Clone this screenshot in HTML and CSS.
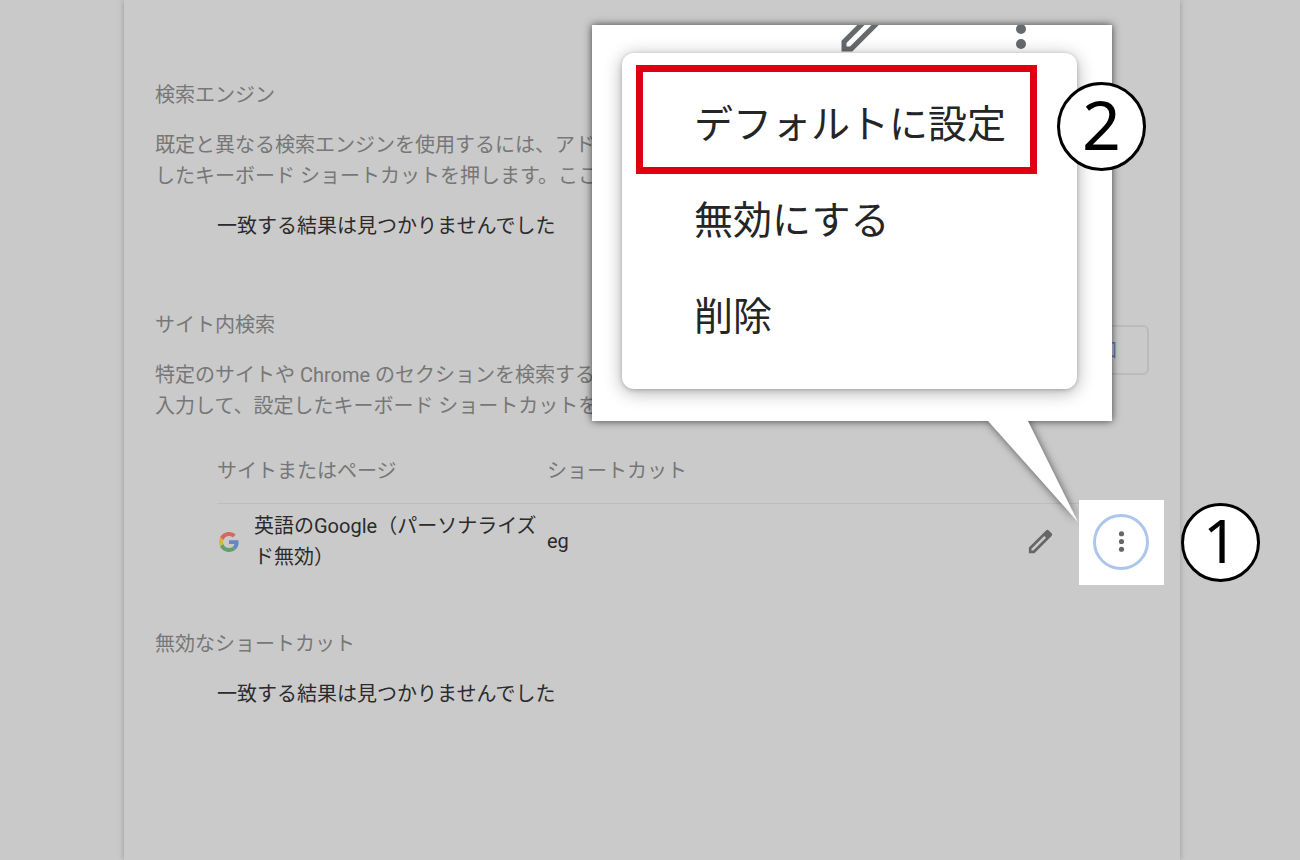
FILE: index.html
```html
<!DOCTYPE html>
<html lang="ja">
<head>
    <meta charset="UTF-8">
    <meta name="viewport" content="width=device-width, initial-scale=1.0">
    <title>検索エンジンの管理</title>
    <link rel="stylesheet" href="styles.css">
</head>
<body>
    <main class="card">
        <section class="group">
            <h2>検索エンジン</h2>
            <p class="description">既定と異なる検索エンジンを使用するには、アドレスバー<br>したキーボード ショートカットを押します。ここで変更</p>
            <p class="empty">一致する結果は見つかりませんでした</p>
        </section>

        <section class="group">
            <div class="group-head">
                <div>
                    <h2>サイト内検索</h2>
                    <p class="description">特定のサイトや Chrome のセクションを検索するには<br>入力して、設定したキーボード ショートカットを押す</p>
                </div>
                <button class="add" type="button">追加</button>
            </div>
            <table class="engines">
                <thead>
                    <tr>
                        <th class="site">サイトまたはページ</th>
                        <th>ショートカット</th>
                        <th class="actions"></th>
                    </tr>
                </thead>
                <tbody>
                    <tr>
                        <td>
                            <div class="name">
                                <svg class="favicon" viewBox="0 0 48 48" aria-hidden="true">
                                    <path fill="#d5695f" d="M24 9.500c3.500 0 6.700 1.200 9.200 3.600l6.900-6.900C35.900 2.400 30.500 0 24 0 14.600 0 6.500 5.400 2.600 13.200l8 6.200C12.400 13.700 17.700 9.500 24 9.500z"/>
                                    <path fill="#6687c4" d="M47 24.500c0-1.600-.2-3.100-.4-4.500H24v9h12.900c-.6 3-2.300 5.500-4.800 7.200l7.700 6C44.400 38 47 31.800 47 24.500z"/>
                                    <path fill="#d9b343" d="M10.500 28.600c-.5-1.500-.8-3-.8-4.600s.3-3.100.8-4.600l-8-6.200C.9 16.500 0 20.100 0 24s.9 7.500 2.600 10.800z"/>
                                    <path fill="#62a06d" d="M24 48c6.500 0 11.900-2.100 15.900-5.800l-7.700-6c-2.200 1.500-4.900 2.300-8.200 2.300-6.300 0-11.600-4.200-13.500-9.900l-8 6.200C6.500 42.600 14.600 48 24 48z"/>
                                </svg>
                                <span>英語のGoogle（パーソナライズ<br>ド無効）</span>
                            </div>
                        </td>
                        <td>eg</td>
                        <td>
                            <div class="buttons">
                                <button class="icon-button" type="button" aria-label="編集">
                                    <svg viewBox="0 0 24 24"><path fill-rule="evenodd" d="M3 16.700L16.300 3.400c.6-.6 1.500-.6 2.100 0l2.200 2.200c.6.6.6 1.500 0 2.100L7.300 21H3zM5 17.600V19h1.400L16.300 9.100l-1.400-1.400z"/></svg>
                                </button>
                                <div class="spotlight">
                                    <button class="icon-button focused" type="button" aria-label="その他の操作">
                                        <svg viewBox="0 0 24 24"><circle cx="12" cy="6" r="2"/><circle cx="12" cy="12" r="2"/><circle cx="12" cy="18" r="2"/></svg>
                                    </button>
                                    <span class="step step-one">1</span>
                                </div>
                            </div>
                        </td>
                    </tr>
                </tbody>
            </table>
        </section>

        <section class="group">
            <h2>無効なショートカット</h2>
            <p class="empty">一致する結果は見つかりませんでした</p>
        </section>

        <!-- enlarged menu -->
        <div class="callout">
            <svg class="tail" viewBox="0 0 90 101" aria-hidden="true"><path d="M0 0H40L90 101z"/></svg>
            <div class="callout-box">
                <svg class="big-icon big-edit" viewBox="0 0 24 24"><path fill-rule="evenodd" d="M3 16.700L16.300 3.400c.6-.6 1.500-.6 2.100 0l2.200 2.200c.6.6.6 1.500 0 2.100L7.300 21H3zM5 17.600V19h1.400L16.300 9.100l-1.400-1.400z"/></svg>
                <svg class="big-icon big-more" viewBox="0 0 24 24"><circle cx="12" cy="6" r="2"/><circle cx="12" cy="12" r="2"/><circle cx="12" cy="18" r="2"/></svg>
                <div class="menu">
                    <button type="button">デフォルトに設定</button>
                    <button type="button">無効にする</button>
                    <button type="button">削除</button>
                    <div class="marker"></div>
                </div>
            </div>
            <span class="step step-two">2</span>
        </div>
    </main>
</body>
</html>
```
FILE: styles.css
```css
* {
    box-sizing: border-box;
}
body {
    margin: 0;
    background: #c9c9c9;
    color: #2b2b2c;
    font-family: Roboto, "Noto Sans CJK JP", sans-serif;
    font-size: 20px;
    line-height: 31px;
}
button {
    font: inherit;
    cursor: pointer;
}
.card {
    position: relative;
    min-height: 100vh;
    margin: 0 120px 0 124px;
    padding: 80px 31px 40px;
    background: #cacaca;
    box-shadow: 0 0 6px rgba(0, 0, 0, 0.25);
}
.group {
    margin-bottom: 68px;
}
.group:last-of-type {
    margin: -19px 0 0;
}
h2 {
    margin: 0 0 19px;
    color: #777;
    font-size: 20px;
    font-weight: 400;
}
p {
    margin: 0;
}
.description {
    color: #777;
    white-space: nowrap;
}
.empty {
    margin-top: 19px;
    padding-left: 62px;
}
.group-head {
    display: flex;
    justify-content: space-between;
    align-items: flex-start;
}
.add {
    flex: none;
    width: 104px;
    height: 50px;
    margin-top: 15px;
    padding: 0;
    border: 2px solid #bbb;
    border-radius: 6px;
    background: none;
    color: #5f7fb5;
}

/* table */
.engines {
    width: calc(100% - 62px);
    margin: 34px 0 0 62px;
    border-collapse: collapse;
    table-layout: fixed;
}
.engines th {
    padding: 0 0 16px;
    border-bottom: 1px solid #bdbdbd;
    color: #777;
    font-weight: 400;
    text-align: left;
}
.engines td {
    height: 76px;
    padding: 0;
}
.site {
    width: 330px;
}
.actions {
    width: 140px;
}
.name {
    display: flex;
    align-items: center;
    gap: 15px;
    padding-left: 2px;
    white-space: nowrap;
}
.favicon {
    width: 20px;
    height: 20px;
}
.buttons {
    display: flex;
    justify-content: flex-end;
    gap: 25px;
}
.icon-button {
    display: flex;
    align-items: center;
    justify-content: center;
    position: relative;
    width: 56px;
    height: 56px;
    padding: 0;
    border: 0;
    border-radius: 50%;
    background: none;
}
.icon-button svg {
    width: 31px;
    height: 31px;
    fill: #666;
}
.icon-button.focused {
    border: 3px solid #adc6ea;
}
.spotlight {
    position: relative;
}
.spotlight::before {
    content: "";
    position: absolute;
    inset: -14px -15px -15px -14px;
    z-index: 2;
    background: #fff;
}
.focused {
    z-index: 3;
}

/* callout */
.callout {
    position: absolute;
    top: 25px;
    right: 68px;
    z-index: 1;
    width: 520px;
}
.callout-box {
    position: relative;
    height: 396px;
    overflow: hidden;
    padding: 28px 35px 0 30px;
    background: #fff;
}
.callout::before {
    content: "";
    position: absolute;
    inset: 0;
    box-shadow: 0 0 8px rgba(0, 0, 0, 0.7);
}
.tail {
    position: absolute;
    top: 396px;
    left: 396px;
    width: 90px;
    height: 101px;
    overflow: visible;
    fill: #fff;
    filter: drop-shadow(0 0 4px rgba(0, 0, 0, 0.6));
}
.big-icon {
    position: absolute;
    top: -26px;
    width: 60px;
    height: 60px;
    fill: #666a6d;
}
.big-edit {
    left: 242px;
}
.big-more {
    left: 399px;
}
.menu {
    position: relative;
    height: 336px;
    padding: 24px 0;
    border-radius: 12px;
    background: #fff;
    box-shadow: 0 3px 18px rgba(0, 0, 0, 0.32), 0 1px 4px rgba(0, 0, 0, 0.2);
}
.menu button {
    display: block;
    width: 100%;
    height: 96px;
    padding: 0 0 0 72px;
    border: 0;
    background: none;
    color: #242527;
    font-size: 39px;
    line-height: 58px;
    text-align: left;
}
.marker {
    position: absolute;
    top: 12px;
    left: 14px;
    width: 401px;
    height: 109px;
    border: 7px solid #e00013;
    pointer-events: none;
}

/* step numbers */
.step {
    display: flex;
    align-items: center;
    justify-content: center;
    position: absolute;
    padding-bottom: 5px;
    border: 3px solid #000;
    border-radius: 50%;
    background: #fff;
    color: #000;
    font-family: "Noto Sans", sans-serif;
    font-weight: 400;
    line-height: 1;
}
.step-one {
    top: -11px;
    left: 88px;
    width: 79px;
    height: 79px;
    font-size: 61px;
}
.step-two {
    top: 57px;
    left: 465px;
    width: 89px;
    height: 89px;
    font-size: 68px;
}
```
